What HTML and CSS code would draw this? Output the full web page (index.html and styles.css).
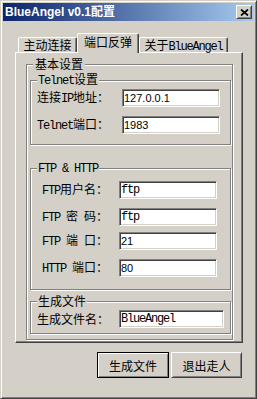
FILE: index.html
```html
<!DOCTYPE html>
<html lang="zh-CN">

<head>
    <meta charset="UTF-8">
    <meta name="viewport" content="width=device-width, initial-scale=1.0">
    <title>BlueAngel v0.1配置</title>
    <link rel="stylesheet" href="styles.css">
</head>

<body>

    <div class="window">
        <div class="titlebar">
            <span class="title">BlueAngel v0.1配置</span>
            <button class="close" aria-label="关闭">
                <svg width="9" height="7" viewBox="0 0 9 7">
                    <path d="M1 0.5l7 6M8 0.5l-7 6" stroke="#000" stroke-width="1.7" fill="none" />
                </svg>
            </button>
        </div>

        <div class="tabctl">
            <div class="tabs">
                <div class="tab">主动连接</div>
                <div class="tab active">端口反弹</div>
                <div class="tab wide">关于<span class="en">BlueAngel</span></div>
            </div>

            <div class="panel">
                <fieldset class="group main">
                    <legend>基本设置</legend>

                    <fieldset class="group telnet">
                        <legend><span class="en">Telnet</span>设置</legend>
                        <div class="row">
                            <label class="lbl">连接<span class="en">IP</span>地址：</label>
                            <input class="txt" type="text" value="127.0.0.1">
                        </div>
                        <div class="row">
                            <label class="lbl"><span class="en">Telnet</span>端口：</label>
                            <input class="txt" type="text" value="1983">
                        </div>
                    </fieldset>

                    <fieldset class="group ftp">
                        <legend><span class="en">FTP &amp; HTTP</span></legend>
                        <div class="row">
                            <label class="lbl"><span class="en">FTP</span>用户名：</label>
                            <input class="txt mono" type="text" value="ftp">
                        </div>
                        <div class="row">
                            <label class="lbl"><span class="en">FTP </span>密<span class="en"> </span>码：</label>
                            <input class="txt mono" type="text" value="ftp">
                        </div>
                        <div class="row tight">
                            <label class="lbl"><span class="en">FTP </span>端<span class="en"> </span>口：</label>
                            <input class="txt" type="text" value="21">
                        </div>
                        <div class="row">
                            <label class="lbl"><span class="en">HTTP </span>端口：</label>
                            <input class="txt" type="text" value="80">
                        </div>
                    </fieldset>

                    <fieldset class="group output">
                        <legend>生成文件</legend>
                        <div class="row">
                            <label class="lbl">生成文件名：</label>
                            <input class="txt mono long" type="text" value="BlueAngel">
                        </div>
                    </fieldset>
                </fieldset>
            </div>
        </div>

        <div class="actions">
            <button class="btn default">生成文件</button>
            <button class="btn">退出走人</button>
        </div>
    </div>

</body>

</html>
```

FILE: styles.css
```css
* {
    box-sizing: border-box;
}

body {
    margin: 0;
    font-family: "Noto Sans CJK SC", sans-serif;
    font-size: 12px;
    line-height: 12px;
    color: #000;
    background-color: #d4d0c8;
}

.en {
    font-family: "Liberation Mono", monospace;
    font-size: 12px;
    letter-spacing: -1.2px;
    white-space: pre;
}

/* window frame */
.window {
    width: 257px;
    height: 399px;
    padding: 2px;
    background-color: #d4d0c8;
    border: 1px solid;
    border-color: #d4d0c8 #404040 #404040 #d4d0c8;
    box-shadow: inset 1px 1px #fff, inset -1px -1px #808080;
}

.titlebar {
    height: 18px;
    display: flex;
    align-items: center;
    justify-content: space-between;
    padding: 0 2px;
    background: linear-gradient(to right, #0a246a, #a6caf0);
}

.title {
    color: #fff;
    font-family: "Liberation Sans", "Noto Sans CJK SC", sans-serif;
    font-weight: bold;
    font-size: 12px;
}

.close {
    width: 16px;
    height: 14px;
    padding: 0;
    display: flex;
    align-items: center;
    justify-content: center;
    background-color: #d4d0c8;
    border: 1px solid;
    border-color: #fff #404040 #404040 #fff;
    box-shadow: inset 1px 1px #d4d0c8, inset -1px -1px #808080;
}

/* tab control */
.tabctl {
    width: 228px;
    margin: 12px 0 0 12px;
}

.tabs {
    display: flex;
    align-items: flex-end;
    height: 19px;
    padding-left: 3px;
    position: relative;
    z-index: 1;
}

.tab {
    width: 59px;
    height: 15px;
    padding-top: 1px;
    text-align: center;
    white-space: nowrap;
    background-color: #d4d0c8;
    border: 1px solid;
    border-bottom: 0;
    border-color: #fff #404040 transparent #fff;
    border-radius: 2px 2px 0 0;
    box-shadow: inset -1px 0 #808080;
}

.tab.active {
    width: 62px;
    height: 20px;
    padding-top: 2px;
    margin-bottom: -1px;
}

.tab.wide {
    width: 89px;
}

.panel {
    height: 291px;
    padding: 5px 0 0 10px;
    border: 1px solid;
    border-color: #fff #404040 #404040 #fff;
    box-shadow: inset -1px -1px #808080;
}

/* group boxes */
.group {
    margin: 0;
    min-width: 0;
    border: 1px solid #808080;
    box-shadow: 1px 1px #fff, inset 1px 1px #fff;
}

.group legend {
    padding: 0 1px;
    line-height: 12px;
    background-color: #d4d0c8;
}

.main {
    width: 207px;
    padding: 3px 1px 5px 3px;
}

.main > legend {
    margin-left: 3px;
    padding: 0 2px;
}

.telnet {
    padding: 2px 0 10px 6px;
}

.ftp {
    margin-top: 16px;
    padding: 6px 0 12px 6px;
}

.ftp .lbl {
    width: 77px;
    margin-left: 5px;
}

.output {
    margin-top: 5px;
    padding: 3px 0 5px 6px;
}

.output .lbl {
    width: 82px;
}

.row {
    display: flex;
    align-items: center;
    height: 18px;
}

.row + .row {
    margin-top: 9px;
}

.row.tight {
    margin-top: 6px;
}

.lbl {
    width: 85px;
    white-space: nowrap;
}

.txt {
    width: 98px;
    height: 18px;
    padding: 0 1px;
    font-family: "Liberation Sans", sans-serif;
    font-size: 11px;
    color: #000;
    background-color: #fff;
    border: 1px solid;
    border-color: #808080 #fff #fff #808080;
    box-shadow: inset 1px 1px #404040, inset -1px -1px #d4d0c8;
    outline: none;
}

.txt.mono {
    font-family: "Liberation Mono", monospace;
    font-size: 12px;
    letter-spacing: -1.2px;
}

.txt.long {
    width: 105px;
}

/* buttons */
.actions {
    display: flex;
    justify-content: flex-end;
    gap: 2px;
    margin: 9px 12px 0 12px;
}

.btn {
    width: 71px;
    height: 26px;
    padding: 0;
    font-family: "Noto Sans CJK SC", sans-serif;
    font-size: 12px;
    color: #000;
    background-color: #d4d0c8;
    border: 1px solid;
    border-color: #fff #404040 #404040 #fff;
    box-shadow: inset 1px 1px #d4d0c8, inset -1px -1px #808080;
}

.btn.default {
    width: 72px;
    border-color: #000;
    box-shadow: inset 1px 1px #fff, inset -1px -1px #808080;
}
```
